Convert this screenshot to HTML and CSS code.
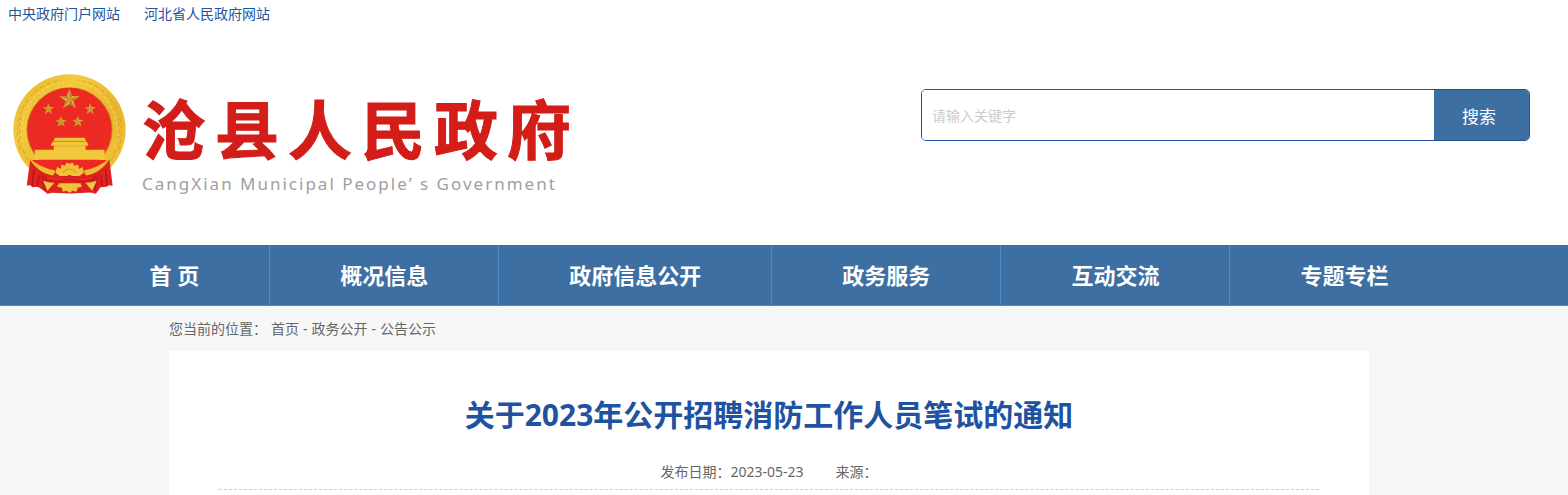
FILE: index.html
```html
<!DOCTYPE html>
<html lang="zh-CN">
<head>
    <meta charset="UTF-8">
    <meta name="viewport" content="width=device-width, initial-scale=1.0">
    <title>沧县人民政府</title>
    <link rel="stylesheet" href="styles.css">
</head>
<body>
    <div class="top-links">
        <a href="#">中央政府门户网站</a>
        <a href="#">河北省人民政府网站</a>
    </div>

    <header class="header">
        <a class="logo" href="#">
            <svg class="emblem" viewBox="38 42 338 358" aria-hidden="true">
                <defs>
                    <linearGradient id="gold" x1="0" y1="0" x2="1" y2="1">
                        <stop offset="0" stop-color="#e6b22c"/>
                        <stop offset=".3" stop-color="#f3cb3d"/>
                        <stop offset=".6" stop-color="#e9b52c"/>
                        <stop offset="1" stop-color="#f2c83c"/>
                    </linearGradient>
                    <g id="star">
                        <path d="M0-31 8-10 30-9 12 5 19 27 0 14-19 27-12 5-30-9-8-10Z" fill="#e0ae3a"/>
                        <path d="M0 0V-31L8-10ZM0 0 30-9 12 5ZM0 0 19 27 0 14ZM0 0-19 27-12 5ZM0 0-30-9-8-10Z" fill="#b98028"/>
                    </g>
                </defs>
                <!-- wreath -->
                <ellipse cx="207" cy="208" rx="168" ry="166" fill="url(#gold)"/>
                <g fill="none" stroke="#dba62a" stroke-width="3" stroke-dasharray="14 7">
                    <path d="M60 270Q38 190 75 130T180 60M82 300Q50 240 62 170"/>
                    <path d="M354 270Q376 190 339 130T234 60M332 300Q364 240 352 170"/>
                </g>
                <g fill="none" stroke="#f9da58" stroke-width="3" stroke-dasharray="9 8">
                    <path d="M70 260Q50 200 86 136T190 68"/>
                    <path d="M344 260Q364 200 328 136T224 68"/>
                </g>
                <ellipse cx="207" cy="209" rx="129" ry="128" fill="#c58b20"/>
                <ellipse cx="207" cy="209" rx="126" ry="126" fill="#ec2a23"/>
                <!-- stars -->
                <use href="#star" transform="translate(207 117)"/>
                <use href="#star" transform="translate(144 146) scale(.55)"/>
                <use href="#star" transform="translate(269 146) scale(.55)"/>
                <use href="#star" transform="translate(182 184) scale(.55)"/>
                <use href="#star" transform="translate(232 184) scale(.55)"/>
                <!-- gate -->
                <path d="M164 232H252L257 242H159ZM156 244H259L264 256H151ZM160 256H255V268H312V298H103V268H160Z" fill="#f3c63b"/>
                <path d="M159 243H257M160 257H255" stroke="#dba030" stroke-width="2"/>
                <!-- ribbons -->
                <path d="M90 296 124 320 165 337 207 345 249 337 292 320 326 296 336 376 324 374 318 379 300 380 286 400 270 396 210 399 155 397 141 400 126 388 112 379 96 380 90 374 79 375Z" fill="#df211f"/>
                <path d="M96 299H318Q304 326 249 342H165Q110 326 96 299Z" fill="#ec2a23"/>
                <path d="M85 292Q118 322 165 330L158 345Q112 338 85 292ZM329 292Q296 322 249 330L256 345Q302 338 329 292Z" fill="#efbd35"/>
                <path d="M101 325 95 377M116 345 111 378M126 355 134 390M315 325 320 377M300 345 305 378M290 355 282 390" stroke="#b5151a" stroke-width="4"/>
                <path d="M127 359 164 364 141 391ZM289 359 252 364 275 391Z" fill="#f0c548"/>
                <!-- gear -->
                <path d="M165 337 170 320 181 326 183 312 194 316 198 306 207 310 216 306 222 316 233 312 235 326 246 320 250 337 237 347 178 347Z" fill="#f2c13a"/>
                <path d="M175 368H240L244 379 231 382 228 394 216 391 208 397 198 391 187 394 184 382 170 379Z" fill="#f2c13a"/>
                <path d="M186 337Q207 315 229 337" fill="none" stroke="#dba030" stroke-width="3"/>
                <path d="M120 339Q165 368 207 343 250 368 297 339L290 360Q250 374 207 358 165 374 126 360Z" fill="#cf1a1d"/>
                <path d="M140 352Q180 363 207 350 235 363 276 352" fill="none" stroke="#ea3a2c" stroke-width="3"/>
            </svg>
            <span class="site-name">
                <span class="name-cn">沧县人民政府</span>
                <span class="name-en">CangXian Municipal People’ s Government</span>
            </span>
        </a>
        <form class="search">
            <input type="text" name="keyword" placeholder="请输入关键字" aria-label="请输入关键字">
            <button type="submit">搜索</button>
        </form>
    </header>

    <nav class="nav">
        <ul>
            <li><a href="#">首 页</a></li>
            <li><a href="#">概况信息</a></li>
            <li><a href="#">政府信息公开</a></li>
            <li><a href="#">政务服务</a></li>
            <li><a href="#">互动交流</a></li>
            <li><a href="#">专题专栏</a></li>
        </ul>
    </nav>

    <main class="main">
        <div class="container">
            <div class="position">
                <span>您当前的位置：</span>
                <a href="#">首页</a>
                <span>-</span>
                <a href="#">政务公开</a>
                <span>-</span>
                <a href="#">公告公示</a>
            </div>
            <article class="article">
                <h1>关于2023年公开招聘消防工作人员笔试的通知</h1>
                <div class="info">
                    <span>发布日期：2023-05-23</span>
                    <span>来源：</span>
                </div>
            </article>
        </div>
    </main>
</body>
</html>
```
FILE: styles.css
```css
* {
    box-sizing: border-box;
}
body {
    margin: 0;
    font-family: "Noto Sans", "Noto Sans CJK SC", sans-serif;
    font-size: 14px;
    color: #666;
    background-color: #fff;
}
a {
    color: inherit;
    text-decoration: none;
}
.top-links {
    display: flex;
    gap: 24px;
    padding: 4px 8px;
    line-height: 20px;
    color: #1f539f;
}
.header {
    display: flex;
    justify-content: space-between;
    align-items: flex-start;
    padding: 46px 38px 43px 13px;
}
.logo {
    display: flex;
    gap: 16px;
}
.emblem {
    width: 113px;
    height: 120px;
}
.site-name {
    display: flex;
    flex-direction: column;
    padding-top: 20px;
    white-space: nowrap;
}
.name-cn {
    font-size: 64px;
    line-height: 72px;
    font-weight: bold;
    letter-spacing: 9px;
    color: #d21d18;
    -webkit-text-stroke: 1px #d21d18;
}
.name-en {
    font-size: 17px;
    line-height: 36px;
    letter-spacing: 2px;
    color: #a0a0a0;
}
.search {
    display: flex;
    width: 609px;
    height: 52px;
    margin-top: 15px;
    border: 1px solid #1f539f;
    border-radius: 5px;
    overflow: hidden;
}
.search input {
    flex: 1;
    min-width: 0;
    padding: 0 10px;
    border: none;
    outline: none;
    font: inherit;
}
.search input::placeholder {
    color: #ccc;
}
.search button {
    width: 95px;
    padding: 0 5px 0 0;
    border: none;
    background-color: #3d6fa3;
    color: #fff;
    font-family: inherit;
    font-size: 17px;
    cursor: pointer;
}
.nav {
    padding-right: 30px;
    background-color: #3d6fa3;
    border-bottom: 1px solid #4d8abf;
}
.nav ul {
    display: flex;
    justify-content: center;
    margin: 0;
    padding: 0;
    list-style: none;
}
.nav li {
    border-right: 1px solid #4d8abf;
}
.nav li:last-child {
    border-right: none;
}
.nav a {
    display: block;
    padding: 0 70px;
    font-size: 22px;
    line-height: 60px;
    font-weight: bold;
    white-space: nowrap;
    color: #fff;
}
.main {
    padding-right: 30px;
    background-color: #f7f7f7;
}
.container {
    max-width: 1200px;
    margin: 0 auto;
}
.position {
    display: flex;
    gap: 4px;
    line-height: 45px;
}
.article {
    padding: 40px 50px 5px;
    background-color: #fff;
}
.article h1 {
    margin: 0;
    font-size: 30px;
    line-height: 48px;
    text-align: center;
    color: #1f539f;
}
.info {
    display: flex;
    justify-content: center;
    gap: 32px;
    padding-top: 15px;
    line-height: 35px;
    border-bottom: 1px dashed #ccc;
}
```
